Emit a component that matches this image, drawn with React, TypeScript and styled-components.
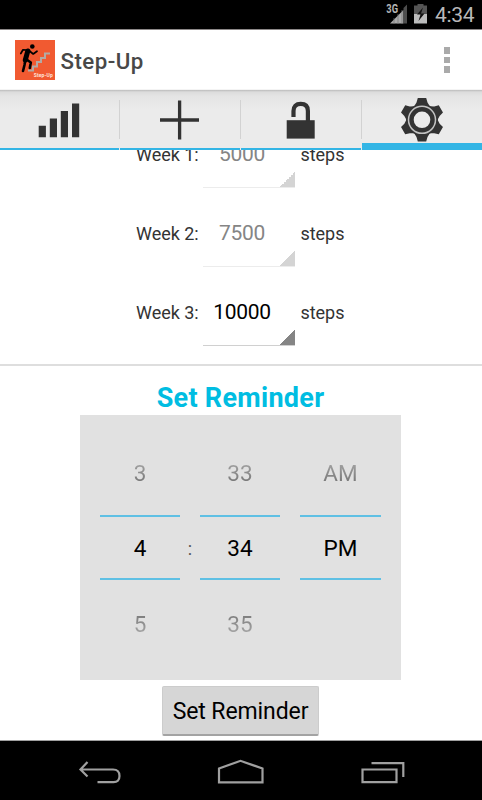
import React from "react";
import styled, { createGlobalStyle } from "styled-components";

const GlobalStyle = createGlobalStyle`
  * { box-sizing: border-box; }
  body { margin: 0; background: #fff; }
`;

const Screen = styled.div`
  width: 482px;
  height: 800px;
  display: flex;
  flex-direction: column;
  overflow: hidden;
  background: #fff;
  color: #333;
  font-family: Roboto, "Liberation Sans", sans-serif;
`;

const StatusBar = styled.header`
  height: 30px;
  flex: none;
  display: flex;
  justify-content: flex-end;
  align-items: flex-start;
  background: #000;
  border-bottom: 1px solid #8c8888;
`;

const Clock = styled.span`
  width: 47px;
  padding-top: 1px;
  font-size: 21px;
  line-height: 28px;
  letter-spacing: -0.3px;
  color: #b9b9b9;
`;

const ActionBar = styled.div`
  height: 60px;
  flex: none;
  display: flex;
  align-items: center;
  padding: 0 32px 0 15px;
  background: #fff;
  border-bottom: 1px solid #f4f4f4;
`;

const Title = styled.h1`
  flex: 1;
  margin: 2px 0 0 5.5px;
  font-size: 22.3px;
  line-height: 28px;
  font-weight: 500;
  letter-spacing: 0.45px;
  color: #484848;
`;

const Overflow = styled.div`
  display: grid;
  gap: 3px;
  margin-top: 1px;
`;

const Dot = styled.i`
  width: 6px;
  height: 6.5px;
  background: #aaa;
`;

const Tabs = styled.nav`
  height: 60px;
  flex: none;
  display: grid;
  grid-template-columns: 119px 121px 121px 121px;
  background: linear-gradient(#bbb 0, #dcdcdc 2px, #e4e4e4 6px, #ebebeb 20px, #ebebeb);
`;

const Tab = styled.div<{ $active?: boolean; $first?: boolean }>`
  display: flex;
  flex-direction: column;
  padding-left: ${(p) => (p.$first ? 0 : 1)}px;
  background: linear-gradient(#d2d2d2, #d2d2d2) 0 10px / ${(p) => (p.$first ? 0 : 1)}px 39px no-repeat;
  &::after {
    content: "";
    height: ${(p) => (p.$active ? 7 : 1.6)}px;
    background: #33b5e5;
  }
  svg { flex: 1; min-height: 0; display: block; width: 100%; }
`;

const Content = styled.main`
  height: 591px;
  flex: none;
  overflow: hidden;
  display: flex;
  flex-direction: column;
  align-items: center;
  padding-right: 1px;
  border-bottom: 1px solid #9f9f9f;
`;

const Goals = styled.section`
  width: 482px;
  height: 215.5px;
  align-self: flex-start;
  flex: none;
  display: flex;
  flex-direction: column;
  justify-content: flex-end;
  padding-bottom: 17.5px;
  border-bottom: 2px solid #dedede;
`;

const GoalRow = styled.div`
  height: 79px;
  flex: none;
  display: grid;
  grid-template-columns: 67px 92px auto;
  padding-left: 136px;
  align-items: end;
`;

const Label = styled.span`
  font-size: 18px;
  line-height: 22px;
  padding-bottom: 22px;
  letter-spacing: -0.05px;
  white-space: nowrap;
`;

const Unit = styled(Label)`
  padding-left: 5.5px;
`;

const Spinner = styled.div<{ $enabled?: boolean }>`
  height: 58px;
  padding: 11px 14px 0 0;
  text-align: center;
  font-size: 21px;
  line-height: 26px;
  letter-spacing: -0.35px;
  color: ${(p) => (p.$enabled ? "#000" : "#858585")};
  border-bottom: 1px solid ${(p) => (p.$enabled ? "#d0d0d0" : "#ececec")};
  background: linear-gradient(135deg, transparent 50%, ${(p) => (p.$enabled ? "#858585" : "#d4d4d4")} 50%)
    right bottom / 15px 15px no-repeat;
`;

const Heading = styled.h2`
  margin: 15.5px 0 0;
  height: 34px;
  font-size: 27px;
  line-height: 34px;
  font-weight: 700;
  letter-spacing: 0.28px;
  color: #00bde2;
  white-space: nowrap;
`;

const Picker = styled.div`
  width: 321px;
  height: 265px;
  flex: none;
  display: grid;
  grid-template-columns: 80px 20px 80px 20px 81px;
  padding: 20px 20px 0;
  background: #e1e1e1;
  font-size: 22.5px;
`;

const Wheel = styled.div`
  display: flex;
  flex-direction: column;
  text-align: center;
`;

const Choice = styled.span<{ $fade: "up" | "down" }>`
  height: 80px;
  line-height: ${(p) => (p.$fade === "up" ? 77 : 89)}px;
  color: transparent;
  background: linear-gradient(
    ${(p) => (p.$fade === "up" ? "to bottom" : "to top")},
    #aaa 25px, #666 55px
  );
  background-clip: text;
  -webkit-background-clip: text;
`;

const Current = styled.span`
  height: 65px;
  line-height: 63px;
  color: #000;
  border: solid #5fc0e4;
  border-width: 2px 0;
`;

const Colon = styled.span`
  padding-top: 104px;
  font-size: 18px;
  line-height: 20px;
  text-align: center;
  color: #555;
`;

const Button = styled.button`
  width: 157px;
  height: 50px;
  flex: none;
  margin: 6px 0 0 0;
  padding: 2px 0 0;
  border: solid #ccc;
  border-width: 1px 1px 2px;
  border-bottom-color: #a3a3a3;
  border-radius: 2px;
  background: #d6d6d6;
  color: #000;
  font: 400 23px/45px Roboto, "Liberation Sans", sans-serif;
  letter-spacing: -0.1px;
  white-space: nowrap;
`;

const NavBar = styled.footer`
  height: 59px;
  flex: none;
  display: grid;
  background: #000;
`;

const StepLogo = () => (
  <svg width="40" height="40" viewBox="0 0 40 40">
    <rect width="40" height="40" fill="#f15a31" />
    <path d="M13 30.500h5v-4h4v-4.500h4v-4h4v-4.500h5" fill="none" stroke="#b3aaa4" strokeWidth="2" />
    <circle cx="17.300" cy="6.500" r="2.300" />
    <g fill="none" stroke="#000" strokeLinecap="round" strokeLinejoin="round">
      <path d="m12.800 11-2.500 9" strokeWidth="5" />
      <path d="m12 10-4-.2-2.200 3.700M14.500 11l3.700 3 3.800-2.800" strokeWidth="1.700" />
      <path d="m12.300 20 3.500 2.500-1 5.500M10.300 20l-.8 5-1.500 6" strokeWidth="2.600" />
    </g>
    <text x="18.800" y="37" fontSize="5" fontWeight="700" fill="#ffe2d8" textLength="19">Step-Up</text>
  </svg>
);

const StatusIcons = () => (
  <svg width="49" height="29" viewBox="0 0 49 29">
    <text x="0.300" y="13" fontSize="12" fontWeight="700" fill="#b5b5b5" textLength="11.700" lengthAdjust="spacingAndGlyphs">3G</text>
    <path d="M4 23.500 17.500 10v13.500Z" fill="#aaa" />
    <path d="M8 18v6M12 14v10M16 10v14" stroke="#777" strokeWidth=".7" />
    <path d="M17.500 8 21 4.500v19h-3.500Z" fill="#4d4d4d" />
    <path d="M28 5.500h3.500V4h6v1.500H41V14H28Z" fill="#555" />
    <path d="M28 14h13v9.500H28Z" fill="#bcbcbc" />
    <path d="m37 7.500-6 7h3.500L32.500 21l6-7.500h-3.500Z" fill="#111" />
  </svg>
);

const BarsIcon = () => (
  <svg viewBox="0 0 119 58" fill="#333">
    <path d="M38.700 35.500h7.200V47h-7.200zM49.800 28.200H57V47h-7.200zM60.800 20.700H68V47h-7.200zM72 13.300h7.200V47H72z" />
  </svg>
);

const PlusIcon = () => (
  <svg viewBox="120 0 120 58">
    <path d="M160 29.800h39M179.600 10.400v38.800" stroke="#333" strokeWidth="3.300" />
  </svg>
);

const LockIcon = () => (
  <svg viewBox="241 0 120 58">
    <path d="M286.700 30h28v18.400h-28z" fill="#333" />
    <path d="M293.500 26.700v-6q0-7 7.200-7t7.200 7V31" fill="none" stroke="#333" strokeWidth="4.200" />
  </svg>
);

const toothAngles = [0, 60, 120, 180, 240, 300];

const GearIcon = () => (
  <svg viewBox="362 0 120 53">
    <g transform="translate(422 29.8)" fill="#333">
      <circle r="16" />
      {toothAngles.map((a) => (
        <path key={a} transform={`rotate(${a})`} d="M-7.800-13.500-5.500-17.200-4.200-21.800h8.400L5.500-17.200 7.800-13.500Z" />
      ))}
      <circle r="13.500" fill="none" stroke="#c2c2c2" strokeWidth="1.500" />
      <circle r="8.300" fill="#ebebeb" />
    </g>
  </svg>
);

const NavIcons = () => (
  <svg width="482" height="58" viewBox="0 741 482 58" fill="none" stroke="#a0a0a0" strokeWidth="2.200">
    <path d="M81 769.500h32q6.500 0 6.500 6.500t-6.500 6.200H97.500M87.500 762l-7 7.500 7 7" />
    <path d="M219 782.300v-13.800l21.500-7.700 22 7.700v13.800Z" />
    <path d="M362.500 769.500h34v12.700h-34ZM371.500 763.200h31.800V777" />
  </svg>
);

const goals = [
  { week: "Week 1:", steps: "5000" },
  { week: "Week 2:", steps: "7500" },
  { week: "Week 3:", steps: "10000", enabled: true },
];

const TimeWheel = ({ values }: { values: string[] }) => (
  <Wheel>
    <Choice $fade="up">{values[0]}</Choice>
    <Current>{values[1]}</Current>
    <Choice $fade="down">{values[2]}</Choice>
  </Wheel>
);

export default function App() {
  return (
    <>
      <GlobalStyle />
      <Screen>
        <StatusBar>
          <StatusIcons />
          <Clock>4:34</Clock>
        </StatusBar>
        <ActionBar>
          <StepLogo />
          <Title>Step-Up</Title>
          <Overflow><Dot /><Dot /><Dot /></Overflow>
        </ActionBar>
        <Tabs>
          <Tab $first><BarsIcon /></Tab>
          <Tab><PlusIcon /></Tab>
          <Tab><LockIcon /></Tab>
          <Tab $active><GearIcon /></Tab>
        </Tabs>
        <Content>
          <Goals>
            {goals.map((g) => (
              <GoalRow key={g.week}>
                <Label>{g.week}</Label>
                <Spinner $enabled={g.enabled}>{g.steps}</Spinner>
                <Unit>steps</Unit>
              </GoalRow>
            ))}
          </Goals>
          <Heading>Set Reminder</Heading>
          <Picker>
            <TimeWheel values={["3", "4", "5"]} />
            <Colon>:</Colon>
            <TimeWheel values={["33", "34", "35"]} />
            <span />
            <TimeWheel values={["AM", "PM", ""]} />
          </Picker>
          <Button>Set Reminder</Button>
        </Content>
        <NavBar><NavIcons /></NavBar>
      </Screen>
    </>
  );
}
